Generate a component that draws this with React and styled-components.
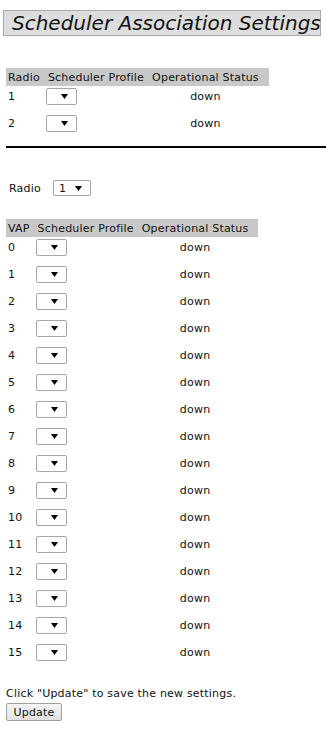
import React from 'react';
import styled, { createGlobalStyle } from 'styled-components';

const GlobalStyle = createGlobalStyle`
  body {
    margin: 0;
    background: #fff;
    font-family: "DejaVu Sans", Verdana, sans-serif;
    font-size: 11px;
    letter-spacing: 0.2px;
    color: #111;
  }
`;

const Page = styled.div`
  width: 326px;
  padding-top: 10px;
  overflow: hidden;
`;

const Title = styled.h1`
  margin: 0 5px 0 3px;
  height: 24px;
  line-height: 24px;
  padding-left: 8px;
  background: #dddddd;
  border: 1px solid #a8a8a8;
  font-size: 20px;
  font-weight: normal;
  font-style: italic;
  letter-spacing: 0;
  color: #111;
  white-space: nowrap;
`;

const Table = styled.table`
  border-collapse: collapse;
  margin: ${p => p.$top}px 0 0 6px;
  th {
    background: #c8c8c8;
    font-weight: normal;
    text-align: left;
    height: 18px;
    padding: 0 6px 0 2px;
    white-space: nowrap;
  }
  th:last-child {
    padding-right: 10px;
  }
  td {
    height: 27px;
    padding: 2px 6px 8px 2px;
    vertical-align: top;
    box-sizing: border-box;
  }
  td:last-child {
    text-align: center;
    padding-right: 10px;
    line-height: 17px;
  }
  td:first-child {
    line-height: 17px;
  }
`;

const SelectBox = styled.div`
  display: inline-flex;
  align-items: center;
  justify-content: space-between;
  box-sizing: border-box;
  width: ${p => p.$w}px;
  height: ${p => p.$h || 17}px;
  margin-left: ${p => p.$ml || 0}px;
  padding: 0 8px 0 5px;
  background: #fff;
  border: 1px solid #a6a6a6;
  border-radius: 2px;
  vertical-align: middle;
  color: #111;
`;

const Rule = styled.hr`
  margin: 6px 0 0 6px;
  border: 0;
  height: 2px;
  background: #000;
`;

const RadioRow = styled.div`
  display: flex;
  align-items: center;
  gap: 12px;
  margin: 32px 0 0 9px;
  height: 16px;
`;

const Note = styled.p`
  margin: 18px 0 0 6px;
  line-height: 14px;
`;

const Button = styled.button`
  margin: 2px 0 0 6px;
  width: 56px;
  height: 18px;
  padding: 0;
  font-family: inherit;
  font-size: 11px;
  letter-spacing: 0.2px;
  color: #111;
  background: linear-gradient(#f6f6f6, #e2e2e2);
  border: 1px solid #a0a0a0;
  border-radius: 2px;
`;

const Arrow = () => (
  <svg width="7" height="5" viewBox="0 0 7 5">
    <polygon points="0,0 7,0 3.5,5" fill="#000" />
  </svg>
);

const Select = ({ value = '', w = 31, h, ml }) => (
  <SelectBox $w={w} $h={h} $ml={ml}>
    <span>{value}</span>
    <Arrow />
  </SelectBox>
);

export default function App() {
  const vaps = Array.from({ length: 16 }, (_, i) => i);
  return (
    <Page>
      <GlobalStyle />
      <Title>Scheduler Association Settings</Title>

      <Table $top={32}>
        <thead>
          <tr>
            <th>Radio</th>
            <th>Scheduler Profile</th>
            <th>Operational Status</th>
          </tr>
        </thead>
        <tbody>
          {[1, 2].map(r => (
            <tr key={r}>
              <td>{r}</td>
              <td><Select ml={-2} /></td>
              <td>down</td>
            </tr>
          ))}
        </tbody>
      </Table>

      <Rule />

      <RadioRow>
        <span>Radio</span>
        <Select value="1" w={38} h={16} />
      </RadioRow>

      <Table $top={23}>
        <thead>
          <tr>
            <th>VAP</th>
            <th>Scheduler Profile</th>
            <th>Operational Status</th>
          </tr>
        </thead>
        <tbody>
          {vaps.map(v => (
            <tr key={v}>
              <td>{v}</td>
              <td><Select ml={-2} /></td>
              <td>down</td>
            </tr>
          ))}
        </tbody>
      </Table>

      <Note>Click "Update" to save the new settings.</Note>
      <Button>Update</Button>
    </Page>
  );
}
